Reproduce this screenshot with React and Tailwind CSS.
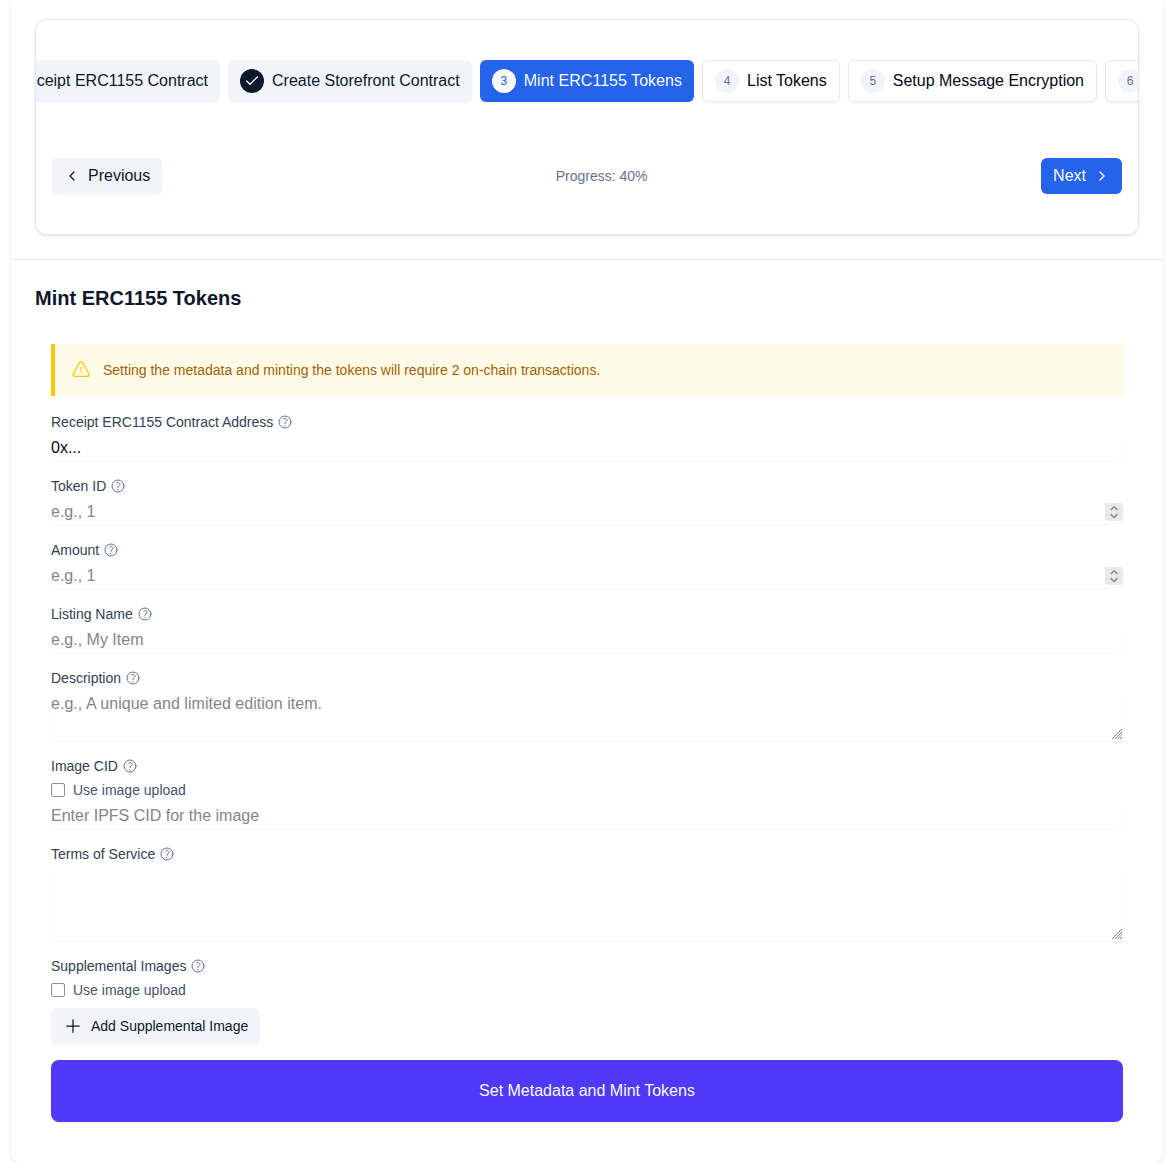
import { Check, ChevronLeft, ChevronRight } from "lucide-react";
import {
  HiOutlineExclamationTriangle,
  HiOutlinePlus,
  HiOutlineQuestionMarkCircle,
} from "react-icons/hi2";

const steps = [
  { id: 4, label: "List Tokens", width: "w-[138px]" },
  { id: 5, label: "Setup Message Encryption", width: "w-[249px]" },
];

const Label = ({ children }) => (
  <div className="flex h-5 items-center gap-1 text-sm text-[#314158]">
    <span>{children}</span>
    <HiOutlineQuestionMarkCircle className="size-4 text-[#62748e]" />
  </div>
);

const Spinner = () => (
  <svg viewBox="0 0 18 18" className="size-[18px] shrink-0 bg-[#e9e9ed]">
    <path
      d="M5.5 7 9 3.8 12.5 7M5.5 11.2 9 14.4l3.5-3.2"
      fill="none"
      stroke="#8f8f9d"
      strokeWidth="1.6"
    />
  </svg>
);

const ResizeHandle = () => (
  <svg
    viewBox="0 0 10 10"
    className="absolute right-px bottom-px size-2.5"
    stroke="#777"
    strokeWidth="0.9"
  >
    <path d="M0 10 10 0M3 10l7-7M5.5 10 10 5.5M8 10l2-2" />
  </svg>
);

const TextField = ({ label, placeholder, value }) => (
  <div>
    <Label>{label}</Label>
    <input
      type="text"
      defaultValue={value}
      placeholder={placeholder}
      className="mt-1 block h-6 w-full rounded-lg shadow-xs outline-none placeholder:text-[#85858a]"
    />
  </div>
);

const NumberField = ({ label, placeholder }) => (
  <div>
    <Label>{label}</Label>
    <div className="mt-1 flex h-6 items-center overflow-hidden rounded-lg shadow-xs">
      <input
        type="text"
        inputMode="numeric"
        placeholder={placeholder}
        className="block h-6 min-w-0 flex-1 outline-none placeholder:text-[#85858a]"
      />
      <Spinner />
    </div>
  </div>
);

const TextArea = ({ label, placeholder, rows }) => (
  <div>
    <Label>{label}</Label>
    <div className="relative mt-1">
      <textarea
        rows={rows}
        placeholder={placeholder}
        className="block w-full resize-none rounded-lg tracking-[0.04px] shadow-xs outline-none placeholder:text-[#85858a]"
      />
      <ResizeHandle />
    </div>
  </div>
);

const UploadToggle = () => (
  <label className="mt-1 flex h-5 items-center gap-2 text-sm text-[#45556c]">
    <input
      type="checkbox"
      className="size-3.5 appearance-none rounded-[2px] border border-[#8f8f9d] bg-white"
    />
    Use image upload
  </label>
);

const App = () => {
  return (
    <div className="h-[1162px] overflow-hidden bg-white font-['Liberation_Sans',Arial,sans-serif] text-base text-[#020618]">
      <div className="-mt-[5px] ml-[11px] h-[1167px] w-[1152px] rounded-lg bg-white shadow-sm">
        {/* Step navigation */}
        <div className="border-b border-gray-200 p-6">
          <div className="h-[216px] overflow-hidden rounded-xl border border-[#e2e8f0] pt-10 shadow-sm">
            <div className="flex h-[42px] gap-2 whitespace-nowrap">
              <div className="flex w-[184px] shrink-0 items-center justify-end overflow-hidden rounded-r-md bg-[#f1f5f9] px-3 text-[#0f172b] shadow-xs">
                <span>Create Receipt ERC1155 Contract</span>
              </div>
              <div className="flex w-[244px] shrink-0 items-center gap-2 rounded-md bg-[#f1f5f9] px-3 text-[#0f172b] shadow-xs">
                <span className="flex size-6 items-center justify-center rounded-full bg-[#0f172b] text-[#f8fafc]">
                  <Check className="size-4" />
                </span>
                <span>Create Storefront Contract</span>
              </div>
              <div className="flex w-[214px] shrink-0 items-center gap-2 rounded-md bg-[#2563eb] px-3 text-[#f8fafc] shadow-xs">
                <span className="flex size-6 items-center justify-center rounded-full bg-[#f8fafc] text-xs text-[#2563eb]">
                  3
                </span>
                <span className="tracking-[0.03px]">Mint ERC1155 Tokens</span>
              </div>
              {steps.map((step) => (
                <div
                  key={step.id}
                  className={`flex shrink-0 items-center gap-2 rounded-md border border-[#e2e8f0] bg-white px-3 shadow-xs ${step.width}`}
                >
                  <span className="flex size-6 items-center justify-center rounded-full bg-[#f1f5f9] text-xs text-[#64748b]">
                    {step.id}
                  </span>
                  <span>{step.label}</span>
                </div>
              ))}
              <div className="flex shrink-0 items-center gap-2 rounded-md border border-[#e2e8f0] bg-white px-3 shadow-xs">
                <span className="flex size-6 items-center justify-center rounded-full bg-[#f1f5f9] text-xs text-[#64748b]">
                  6
                </span>
              </div>
            </div>

            <div className="mt-14 flex items-center justify-between px-4">
              <button className="flex h-9 items-center gap-2 rounded-md bg-[#f1f5f9] px-3 text-[#0f172b] shadow-xs">
                <ChevronLeft className="size-4" />
                Previous
              </button>
              <span className="text-sm text-[#64748b]">Progress: 40%</span>
              <button className="flex h-9 items-center gap-2 rounded-md bg-[#2563eb] px-3 text-[#f8fafc] shadow-xs">
                Next
                <ChevronRight className="size-4" />
              </button>
            </div>
          </div>
        </div>

        {/* Mint form */}
        <div className="p-6">
          <h2 className="text-xl font-bold text-[#0f172b]">
            Mint ERC1155 Tokens
          </h2>

          <div className="mt-8 space-y-4 px-4">
            <div className="flex h-[52px] items-center gap-3 border-l-4 border-[#fac800] bg-[#fefce8] px-4 text-sm text-[#a65f00]">
              <HiOutlineExclamationTriangle className="size-5 text-[#fac800]" />
              <p>
                Setting the metadata and minting the tokens will require 2
                on-chain transactions.
              </p>
            </div>

            <TextField label="Receipt ERC1155 Contract Address" value="0x..." />
            <NumberField label="Token ID" placeholder="e.g., 1" />
            <NumberField label="Amount" placeholder="e.g., 1" />
            <TextField label="Listing Name" placeholder="e.g., My Item" />
            <TextArea
              label="Description"
              placeholder="e.g., A unique and limited edition item."
              rows={2}
            />

            <div>
              <Label>Image CID</Label>
              <UploadToggle />
              <input
                type="text"
                placeholder="Enter IPFS CID for the image"
                className="mt-1 block h-6 w-full rounded-lg shadow-xs outline-none placeholder:text-[#85858a]"
              />
            </div>

            <TextArea label="Terms of Service" rows={3} />

            <div>
              <Label>Supplemental Images</Label>
              <UploadToggle />
              <button className="mt-2 flex h-9 items-center gap-2 rounded-md bg-[#f1f5f9] px-3 text-sm text-[#0f172b] shadow-xs">
                <HiOutlinePlus className="size-5" />
                Add Supplemental Image
              </button>
            </div>

            <button className="h-[62px] w-full rounded-lg bg-[#4f39f6] text-[#f8fafc] shadow-xs">
              Set Metadata and Mint Tokens
            </button>
          </div>
        </div>
      </div>
    </div>
  );
};

export default App;
